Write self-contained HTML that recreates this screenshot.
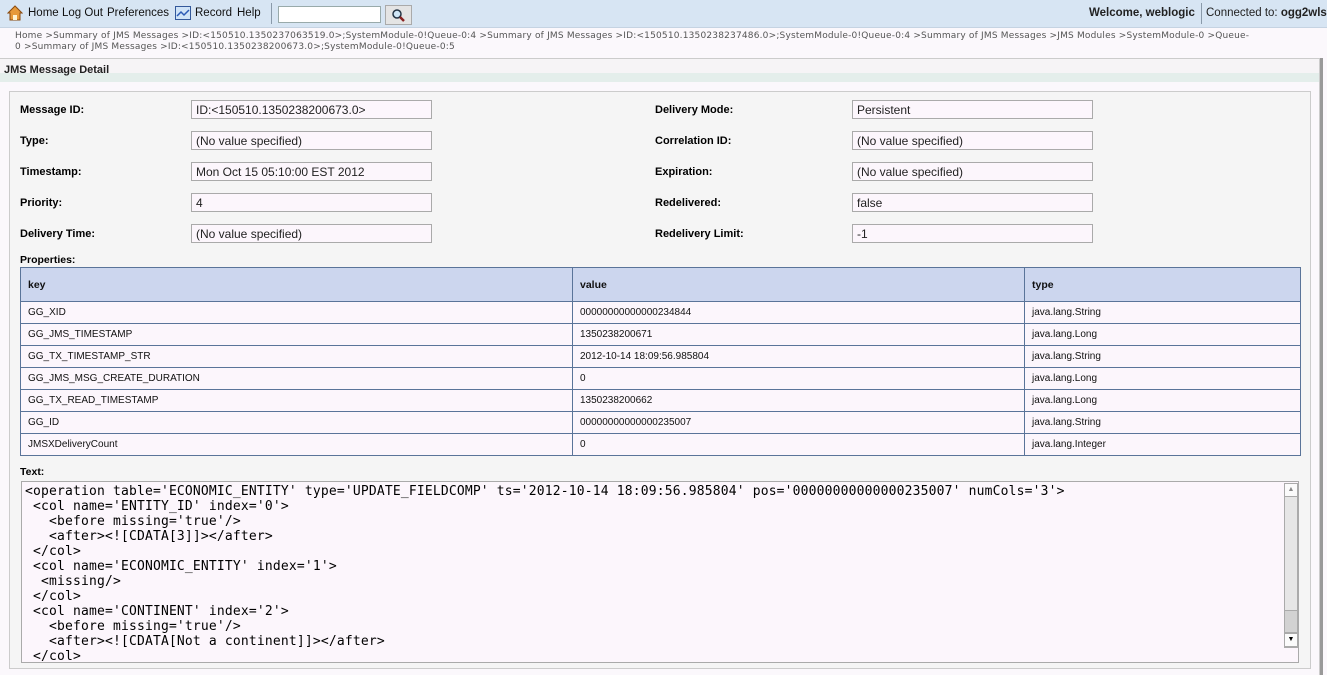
<!DOCTYPE html>
<html><head><meta charset="utf-8"><style>
*{margin:0;padding:0;box-sizing:border-box}
body{width:1327px;height:675px;overflow:hidden;background:#fbf8fc;font-family:"Liberation Sans",Arial,sans-serif;position:relative;color:#000}
.a{position:absolute;white-space:nowrap}
#top{left:0;top:0;width:1327px;height:28px;background:#d7e5f3;border-bottom:1px solid #c5d3e2}
.nav{font-size:11.5px;top:7px;color:#111}
.crumb{font-family:"DejaVu Sans",sans-serif;font-size:9px;color:#555;left:15px;letter-spacing:0.19px}
.lbl{font-size:11px;font-weight:bold}
.inp{height:19px;width:241px;border:1px solid #aaa;background:#fcf6fc;font-family:"Liberation Sans",sans-serif;font-size:12px;padding:2px 0 0 4px;color:#222}
table{position:absolute;left:20px;top:267px;width:1281px;border-collapse:collapse;font-size:10px}
td,th{border:1px solid #5a7499;text-align:left;padding-left:7px;height:22px;background:#fcf6fc;color:#111;font-weight:normal}
th{background:#ccd6ee;height:34px;font-weight:bold;font-size:10.5px}
#ta{left:21px;top:481px;width:1278px;height:182px;border:1px solid #aaa;background:#fcf6fc;overflow:hidden}
pre{font-family:"DejaVu Sans Mono",monospace;font-size:13px;line-height:15px;position:absolute;left:3px;top:2px;letter-spacing:0.17px}
</style></head><body>
<div class="a" id="top"></div>
<svg class="a" style="left:7px;top:5px" width="16" height="16" viewBox="0 0 16 16"><path d="M1 8 L8 1 L15 8 L13 8 L13 15 L3 15 L3 8Z" fill="#e79a3a" stroke="#8a4a10"/><rect x="6" y="10" width="4" height="5" fill="#fff3d0"/></svg>
<div class="a nav" style="left:28px">Home</div>
<div class="a nav" style="left:62px">Log Out</div>
<div class="a nav" style="left:107px">Preferences</div>
<svg class="a" style="left:175px;top:6px" width="16" height="14"><rect x="0.5" y="0.5" width="15" height="13" fill="#cfe3f7" stroke="#33589a"/><path d="M2 10 L6 6 L9 9 L14 4" stroke="#2b5ab5" stroke-width="1.5" fill="none"/></svg>
<div class="a nav" style="left:195px">Record</div>
<div class="a nav" style="left:237px">Help</div>
<div class="a" style="left:271px;top:3px;width:1px;height:21px;background:#8a9aaa"></div>
<div class="a" style="left:278px;top:6px;width:103px;height:17px;background:#fff;border:1px solid #9aa"></div>
<div class="a" style="left:385px;top:5px;width:27px;height:20px;background:#e4e4e4;border:1px solid #aaa"></div>
<svg class="a" style="left:391px;top:8px" width="14" height="14"><circle cx="6" cy="6" r="4" fill="#cfe6f7" stroke="#234" stroke-width="1.5"/><path d="M9 9 L13 13" stroke="#822" stroke-width="2.5"/></svg>
<div class="a" style="left:1089px;top:7px;font-size:11.5px;font-weight:bold;color:#222">Welcome, weblogic</div>
<div class="a" style="left:1201px;top:3px;width:1px;height:21px;background:#8a9aaa"></div>
<div class="a" style="left:1206px;top:7px;font-size:11.5px;color:#222">Connected to: <b>ogg2wls</b></div>
<div class="a crumb" style="top:31px">Home &gt;Summary of JMS Messages &gt;ID:&lt;150510.1350237063519.0&gt;;SystemModule-0!Queue-0:4 &gt;Summary of JMS Messages &gt;ID:&lt;150510.1350238237486.0&gt;;SystemModule-0!Queue-0:4 &gt;Summary of JMS Messages &gt;JMS Modules &gt;SystemModule-0 &gt;Queue-</div>
<div class="a crumb" style="top:42px">0 &gt;Summary of JMS Messages &gt;ID:&lt;150510.1350238200673.0&gt;;SystemModule-0!Queue-0:5</div>
<div class="a" style="left:0;top:58px;width:1320px;height:1px;background:#ccc"></div>
<div class="a" style="left:0;top:59px;width:1320px;height:14px;background:#f6f4f6"></div>
<div class="a" style="left:0;top:73px;width:1320px;height:9px;background:#e4eeeb"></div>
<div class="a" style="left:4px;top:64px;font-size:11px;font-weight:bold;color:#222">JMS Message Detail</div>
<div class="a" style="left:1319px;top:58px;width:4px;height:617px;background:#999;border-left:1px solid #ccc"></div>
<div class="a" style="left:9px;top:91px;width:1302px;height:578px;background:#f5f5f5;border:1px solid #ccc"></div>

<div class="a lbl" style="left:20px;top:104px">Message ID:</div><div class="a inp" style="left:191px;top:100px">ID:&lt;150510.1350238200673.0&gt;</div>
<div class="a lbl" style="left:20px;top:135px">Type:</div><div class="a inp" style="left:191px;top:131px">(No value specified)</div>
<div class="a lbl" style="left:20px;top:166px">Timestamp:</div><div class="a inp" style="left:191px;top:162px">Mon Oct 15 05:10:00 EST 2012</div>
<div class="a lbl" style="left:20px;top:197px">Priority:</div><div class="a inp" style="left:191px;top:193px">4</div>
<div class="a lbl" style="left:20px;top:228px">Delivery Time:</div><div class="a inp" style="left:191px;top:224px">(No value specified)</div>
<div class="a lbl" style="left:655px;top:104px">Delivery Mode:</div><div class="a inp" style="left:852px;top:100px">Persistent</div>
<div class="a lbl" style="left:655px;top:135px">Correlation ID:</div><div class="a inp" style="left:852px;top:131px">(No value specified)</div>
<div class="a lbl" style="left:655px;top:166px">Expiration:</div><div class="a inp" style="left:852px;top:162px">(No value specified)</div>
<div class="a lbl" style="left:655px;top:197px">Redelivered:</div><div class="a inp" style="left:852px;top:193px">false</div>
<div class="a lbl" style="left:655px;top:228px">Redelivery Limit:</div><div class="a inp" style="left:852px;top:224px">-1</div>

<div class="a lbl" style="left:20px;top:254px;font-size:10.5px">Properties:</div>
<table>
<tr><th style="width:552px">key</th><th style="width:452px">value</th><th>type</th></tr>
<tr><td>GG_XID</td><td>00000000000000234844</td><td>java.lang.String</td></tr>
<tr><td>GG_JMS_TIMESTAMP</td><td>1350238200671</td><td>java.lang.Long</td></tr>
<tr><td>GG_TX_TIMESTAMP_STR</td><td>2012-10-14 18:09:56.985804</td><td>java.lang.String</td></tr>
<tr><td>GG_JMS_MSG_CREATE_DURATION</td><td>0</td><td>java.lang.Long</td></tr>
<tr><td>GG_TX_READ_TIMESTAMP</td><td>1350238200662</td><td>java.lang.Long</td></tr>
<tr><td>GG_ID</td><td>00000000000000235007</td><td>java.lang.String</td></tr>
<tr><td>JMSXDeliveryCount</td><td>0</td><td>java.lang.Integer</td></tr>
</table>
<div class="a lbl" style="left:20px;top:466px;font-size:10.5px">Text:</div>
<div class="a" id="ta"><pre>&lt;operation table='ECONOMIC_ENTITY' type='UPDATE_FIELDCOMP' ts='2012-10-14 18:09:56.985804' pos='00000000000000235007' numCols='3'&gt;
 &lt;col name='ENTITY_ID' index='0'&gt;
   &lt;before missing='true'/&gt;
   &lt;after&gt;&lt;![CDATA[3]]&gt;&lt;/after&gt;
 &lt;/col&gt;
 &lt;col name='ECONOMIC_ENTITY' index='1'&gt;
  &lt;missing/&gt;
 &lt;/col&gt;
 &lt;col name='CONTINENT' index='2'&gt;
   &lt;before missing='true'/&gt;
   &lt;after&gt;&lt;![CDATA[Not a continent]]&gt;&lt;/after&gt;
 &lt;/col&gt;</pre>
<div class="a" style="left:1262px;top:1px;width:14px;height:165px;background:#e6e6e6;border:1px solid #aaa"></div>
<div class="a" style="left:1262px;top:1px;width:14px;height:14px;background:#fbfbfb;border:1px solid #aaa;font-size:7px;color:#888;text-align:center;line-height:12px">▲</div>
<div class="a" style="left:1262px;top:128px;width:14px;height:23px;background:#d2d2d2;border:1px solid #aaa"></div>
<div class="a" style="left:1262px;top:151px;width:14px;height:14px;background:#fbfbfb;border:1px solid #aaa;font-size:7px;color:#000;text-align:center;line-height:12px">▼</div>
</div>
</body></html>
